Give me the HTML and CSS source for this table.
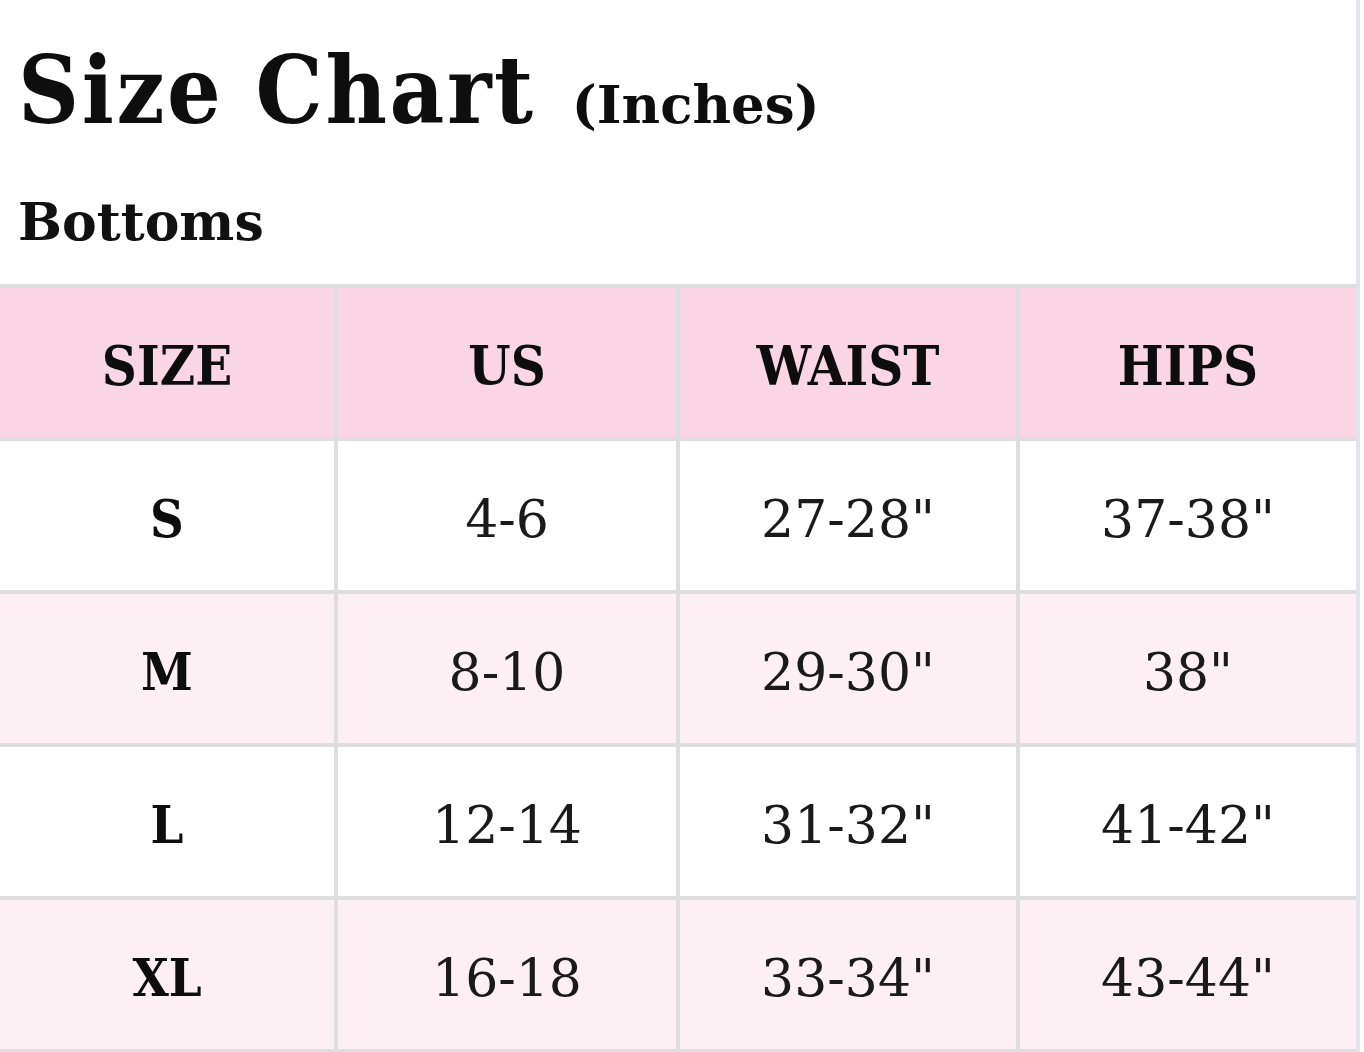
FILE: index.html
```html
<!DOCTYPE html>
<html lang="en">
<head>
<meta charset="utf-8">
<title>Size Chart</title>
<link rel="stylesheet" href="styles.css">
</head>
<body>
<div class="page">
  <header class="head">
    <h1 class="title">Size Chart <span class="unit">(Inches)</span></h1>
    <h2 class="section">Bottoms</h2>
  </header>
  <div class="chart" role="table">
    <div class="cell th" role="columnheader">SIZE</div>
    <div class="cell th" role="columnheader">US</div>
    <div class="cell th" role="columnheader">WAIST</div>
    <div class="cell th" role="columnheader">HIPS</div>

    <div class="cell size">S</div>
    <div class="cell num">4-6</div>
    <div class="cell num">27-28"</div>
    <div class="cell num">37-38"</div>

    <div class="cell size alt">M</div>
    <div class="cell num alt">8-10</div>
    <div class="cell num alt">29-30"</div>
    <div class="cell num alt">38"</div>

    <div class="cell size">L</div>
    <div class="cell num">12-14</div>
    <div class="cell num">31-32"</div>
    <div class="cell num">41-42"</div>

    <div class="cell size alt">XL</div>
    <div class="cell num alt">16-18</div>
    <div class="cell num alt">33-34"</div>
    <div class="cell num alt">43-44"</div>
  </div>
</div>
</body>
</html>
```
FILE: styles.css
```css
html, body {
  margin: 0;
  padding: 0;
  background: #ffffff;
}

body {
  font-family: "DejaVu Serif", "Liberation Serif", serif;
  color: #111111;
}

.page {
  width: 1356px;
  border-right: 4px solid #e2e3ec;
  min-height: 1052px;
  box-sizing: content-box;
}

.head {
  height: 284px;
  padding-left: 18px;
  box-sizing: border-box;
  overflow: hidden;
}

.title {
  margin: 0;
  padding-top: 43px;
  font-family: "DejaVu Serif Condensed", "DejaVu Serif", serif;
  font-stretch: condensed;
  font-weight: bold;
  font-size: 94px;
  letter-spacing: 2.6px;
  line-height: 1;
  color: #0e0e0e;
  white-space: nowrap;
}

.unit {
  font-family: "DejaVu Serif", serif;
  font-stretch: normal;
  font-size: 53px;
  letter-spacing: 0;
  margin-left: 4px;
}

.section {
  margin: 59px 0 0;
  font-family: "DejaVu Serif", serif;
  font-weight: bold;
  font-size: 52px;
  line-height: 1;
  color: #111111;
}

.chart {
  display: grid;
  grid-template-columns: 334px 338px 336px 336px;
  grid-auto-rows: 149px;
  gap: 4px;
  padding: 4px 0;
  background: #dedede;
}

.cell {
  display: flex;
  align-items: center;
  justify-content: center;
  background: #ffffff;
  padding-top: 6px;
  box-sizing: border-box;
}

.cell.alt {
  background: #fdf0f4;
}

.th {
  background: #fad5e5;
  font-family: "DejaVu Serif Condensed", "DejaVu Serif", serif;
  font-stretch: condensed;
  font-weight: bold;
  font-size: 54px;
  color: #0d0d0d;
}

.size {
  font-family: "DejaVu Serif Condensed", "DejaVu Serif", serif;
  font-stretch: condensed;
  font-weight: bold;
  font-size: 52px;
  color: #0d0d0d;
}

.num {
  font-family: "DejaVu Serif", serif;
  font-weight: normal;
  font-size: 52px;
  color: #1a1a1a;
}
```
